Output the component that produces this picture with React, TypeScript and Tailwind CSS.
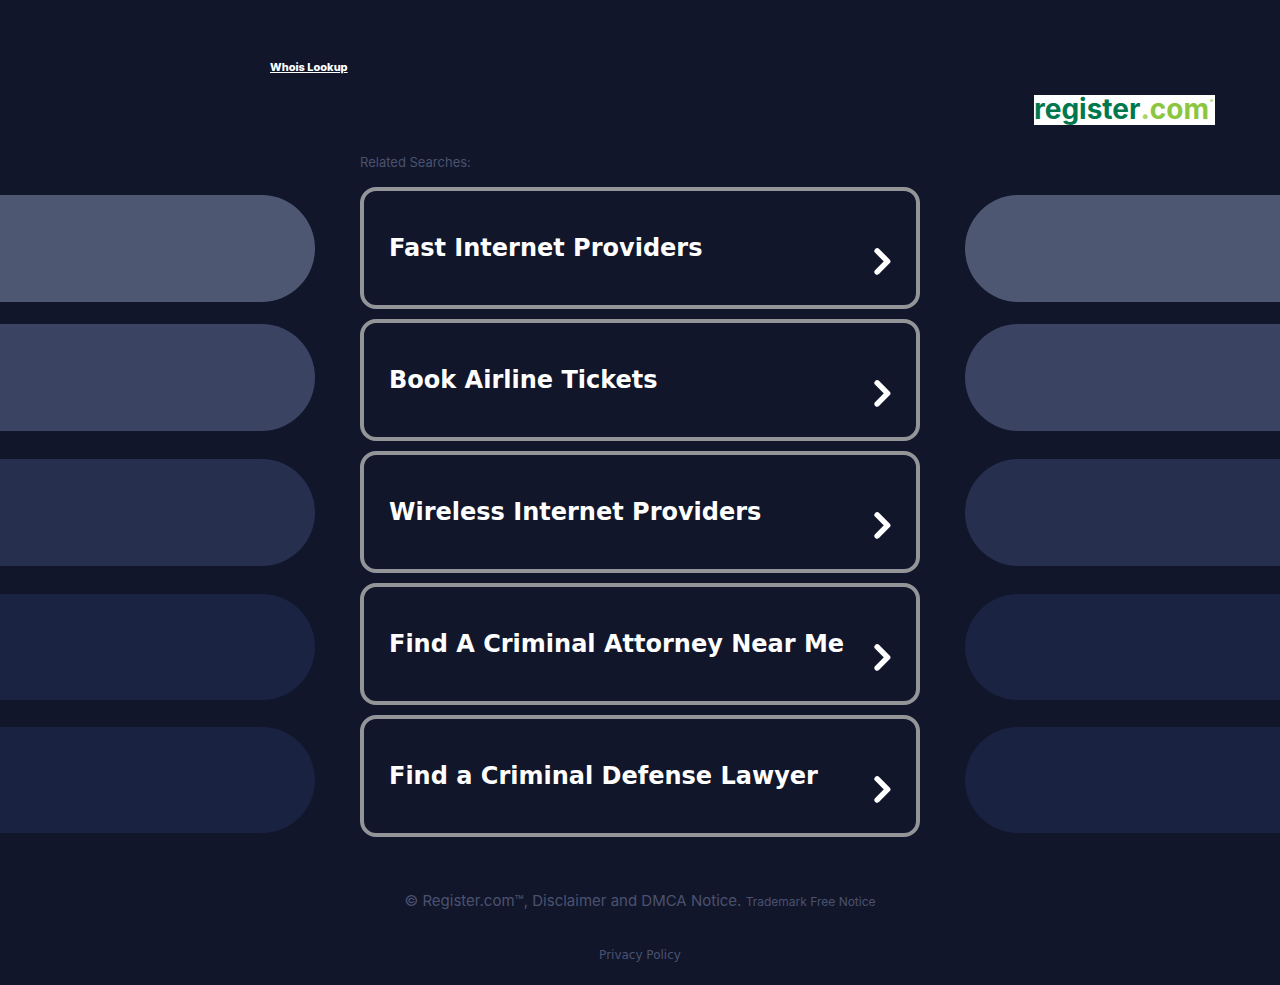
const searches = [
  "Fast Internet Providers",
  "Book Airline Tickets",
  "Wireless Internet Providers",
  "Find A Criminal Attorney Near Me",
  "Find a Criminal Defense Lawyer",
];

const ChevronIcon = () => (
  <svg className="w-5 h-7 shrink-0" viewBox="0 0 20 28" fill="none" aria-hidden="true">
    <path d="M5.2 3.9 15.6 14.4 5.2 24.9" stroke="#fff" strokeWidth="5.6" strokeLinecap="round" strokeLinejoin="round" />
  </svg>
);

// Fading bars on both sides of the list
const SideBars = ({ side }: { side: "left" | "right" }) => {
  const rounded = side === "left" ? "rounded-r-full" : "rounded-l-full";
  return (
    <div className="flex-1 flex flex-col pt-2" aria-hidden="true">
      <div className={`h-[107px] bg-[#4e5772] ${rounded}`} />
      <div className={`mt-[22px] h-[107px] bg-[#3b4362] ${rounded}`} />
      <div className={`mt-7 h-[107px] bg-[#262f4e] ${rounded}`} />
      <div className={`mt-7 h-[106px] bg-[#1a2342] ${rounded}`} />
      <div className={`mt-[27px] h-[106px] bg-[#192241] ${rounded}`} />
    </div>
  );
};

const Logo = () => (
  <a
    href="#"
    className="relative flex items-start h-[30px] w-[181px] bg-white font-['Inter',sans-serif] text-[28px] leading-7 font-bold whitespace-nowrap"
  >
    <span className="text-[#00784e]">register</span>
    <span className="text-[#a5d867]">.</span>
    <span className="text-[#8cc63f]">com</span>
    <span className="absolute top-1 right-0.5 size-[3px] rounded-full bg-[#b9dd8b]" />
  </a>
);

const App = () => {
  return (
    <div className="min-h-screen bg-[#11162a] font-['Inter',sans-serif] text-[#4b5270]">
      <header className="flex justify-between items-start pt-[59px] pl-[270px] pr-[65px]">
        <a href="#" className="text-[11px] leading-4 font-extrabold text-white underline">
          Whois Lookup
        </a>
        <div className="pt-9">
          <Logo />
        </div>
      </header>

      <div className="mx-auto w-full max-w-[560px] pt-[29px] pb-[17px]">
        <p className="text-[13px] leading-4">Related Searches:</p>
      </div>

      <main className="flex gap-[45px]">
        <SideBars side="left" />
        <ul className="w-[560px] flex flex-col gap-2.5">
          {searches.map((search) => (
            <li key={search}>
              <a
                href="#"
                className="flex justify-between items-start h-[122px] pt-[41px] pl-[25px] pr-6 border-4 border-[#949599] rounded-2xl font-['DejaVu_Sans',sans-serif] text-2xl leading-8 font-bold text-white"
              >
                <span className="whitespace-nowrap">{search}</span>
                <span className="pt-[15px]">
                  <ChevronIcon />
                </span>
              </a>
            </li>
          ))}
        </ul>
        <SideBars side="right" />
      </main>

      <footer className="pt-[54px] text-center">
        <p className="text-[15px] leading-5">
          © Register.com™, Disclaimer and DMCA Notice.{" "}
          <a href="#" className="text-xs">
            Trademark Free Notice
          </a>
        </p>
        <p className="pt-9 pb-4 font-['DejaVu_Sans',sans-serif] text-xs leading-4">
          <a href="#">Privacy Policy</a>
        </p>
      </footer>
    </div>
  );
};

export default App;
